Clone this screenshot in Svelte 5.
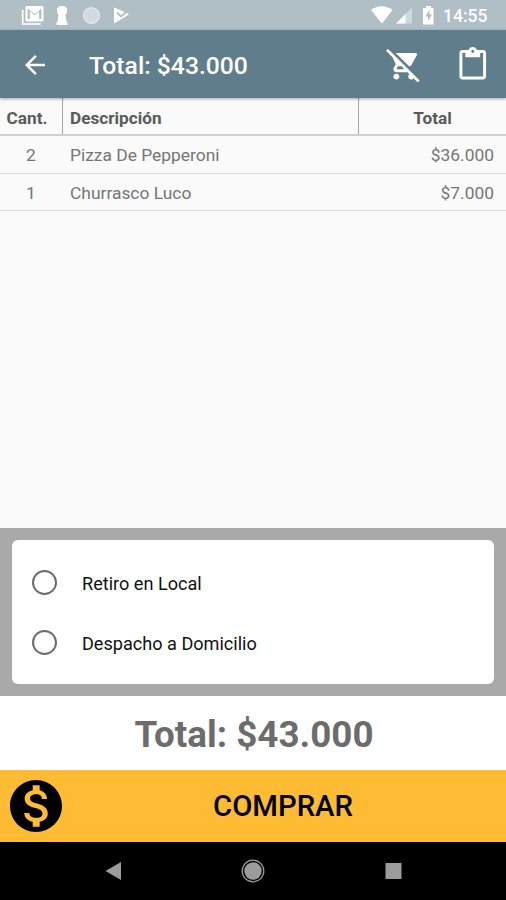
<script>
    const total = '$43.000'
    const items = [
        { qty: 2, name: 'Pizza De Pepperoni', price: '$36.000' },
        { qty: 1, name: 'Churrasco Luco', price: '$7.000' }
    ]
    const options = ['Retiro en Local', 'Despacho a Domicilio']
    let selected = ''
</script>

<div class="screen">
    <div class="status">
        <svg class="notifications" width="112" height="30" viewBox="0 0 112 30" fill="#fff">
            <path d="M1.700 10v14h18" fill="none" stroke="#fff" stroke-width="1.700" />
            <path fill-rule="evenodd" d="M6 6h15q1.500 0 1.500 1.500v12.500q0 1.500-1.500 1.500H6q-1.500 0-1.500-1.500V7.500Q4.500 6 6 6zM6.600 8.600V19h2.300V11.300l4.600 3.900 4.600-3.900V19h2.300V8.600L13.500 14z" />
            <path d="M38.500 6h5l2.500 2.500v4l-1.500 2.500 1 7h1v3h-11v-3h1l1-7-1.500-2.500v-4z" />
            <circle cx="70.500" cy="15.500" r="7.800" fill="#d1dade" stroke="#e1e7ea" stroke-width="1.500" />
            <path d="M93 7.500L106 13l2 1.500L93 23.500z" />
            <path d="M96 12.500l4 4 7.500-6.500" fill="none" stroke="#b0bec5" stroke-width="1.800" />
        </svg>
        <svg class="signals" width="66" height="30" viewBox="0 0 66 30" fill="#fff">
            <path d="M0 10Q10.500 2.500 21.500 10L11 23.500z" />
            <path d="M41 7.500v16H25z" fill="#d0d9dd" />
            <path d="M34.500 14v9.500h-9.500z" />
            <path fill-rule="evenodd" d="M55 6h5v2h2.500v16.500H52V8h3zM58.500 10l-4 6.500H57V21l4-6.500h-2.500z" />
        </svg>
        <span class="clock">14:55</span>
    </div>

    <header>
        <svg class="back" viewBox="0 0 24 24" fill="#fff">
            <path d="M20 11H7.830l5.590-5.590L12 4l-8 8 8 8 1.410-1.410L7.830 13H20v-2z" />
        </svg>
        <h1>Total: {total}</h1>
        <svg class="action" viewBox="0 0 24 24" fill="#fff">
            <path d="M22.730 22.730L2.770 2.770 2 2l-.730-.730L0 2.540l4.390 4.390 2.210 4.660-1.350 2.450c-.160.280-.250.610-.250.960 0 1.100.900 2 2 2h7.460l1.380 1.380c-.500.360-.830.950-.830 1.620 0 1.100.890 2 1.990 2 .670 0 1.260-.330 1.620-.840L21.460 24l1.270-1.270zM7.420 15c-.140 0-.250-.110-.250-.250l.030-.120.900-1.630h2.360l2 2H7.420zm8.130-2c.750 0 1.410-.410 1.750-1.030l3.580-6.490c.080-.140.120-.310.120-.480 0-.550-.450-1-1-1H6.540l9.010 9zM7 18c-1.100 0-1.990.900-1.990 2S5.900 22 7 22s2-.900 2-2-.900-2-2-2z" />
        </svg>
        <svg class="action" viewBox="0 0 24 24" fill="#fff">
            <path d="M19 2h-4.180C14.400.840 13.300 0 12 0c-1.300 0-2.400.840-2.820 2H5c-1.100 0-2 .900-2 2v16c0 1.100.900 2 2 2h14c1.100 0 2-.900 2-2V4c0-1.100-.900-2-2-2zm-7 0c.550 0 1 .450 1 1s-.450 1-1 1-1-.450-1-1 .450-1 1-1zm7 18H5V4h2v3h10V4h2v16z" />
        </svg>
    </header>

    <main>
        <div class="row head">
            <span class="qty">Cant.</span>
            <span class="name">Descripción</span>
            <span class="price">Total</span>
        </div>
        {#each items as item}
            <div class="row">
                <span class="qty">{item.qty}</span>
                <span class="name">{item.name}</span>
                <span class="price">{item.price}</span>
            </div>
        {/each}
    </main>

    <section class="delivery">
        <div class="card">
            {#each options as option}
                <label>
                    <input type="radio" name="delivery" value={option} bind:group={selected} />
                    <span>{option}</span>
                </label>
            {/each}
        </div>
    </section>

    <div class="total"><span>Total: {total}</span></div>

    <button class="buy">
        <svg viewBox="2 2 20 20">
            <path d="M12 2C6.480 2 2 6.480 2 12s4.480 10 10 10 10-4.480 10-10S17.520 2 12 2zm1.410 16.090V20h-2.670v-1.930c-1.710-.360-3.160-1.460-3.270-3.400h1.960c.100 1.050.820 1.870 2.650 1.870 1.960 0 2.400-.980 2.400-1.590 0-.830-.440-1.610-2.670-2.140-2.480-.600-4.180-1.620-4.180-3.670 0-1.720 1.390-2.840 3.110-3.210V4h2.670v1.950c1.860.450 2.790 1.860 2.850 3.390H14.300c-.050-1.110-.640-1.870-2.220-1.870-1.500 0-2.400.680-2.400 1.640 0 .840.650 1.390 2.670 1.910s4.180 1.390 4.180 3.910c-.010 1.830-1.380 2.830-3.120 3.160z" />
        </svg>
        <span>COMPRAR</span>
    </button>

    <nav>
        <svg width="506" height="58" viewBox="0 0 506 58" fill="#9c9c9c">
            <path d="M105.500 29L121 20v18z" />
            <circle cx="253" cy="29" r="10.800" fill="none" stroke="#9c9c9c" stroke-width="1.300" />
            <circle cx="253" cy="29" r="8.700" />
            <path d="M385.500 21h16v16h-16z" />
        </svg>
    </nav>
</div>

<style>
    :global(body) {
        margin: 0;
    }
    .screen {
        display: flex;
        flex-direction: column;
        width: 506px;
        height: 900px;
        overflow: hidden;
        background: #fafafa;
        font-family: Roboto, sans-serif;
    }
    .status {
        display: flex;
        align-items: center;
        height: 30px;
        padding-left: 21px;
        background: #b0bec5;
    }
    .signals {
        margin-left: 238px;
    }
    .clock {
        margin-left: 6px;
        padding-top: 2px;
        color: #fff;
        font-size: 17.5px;
        font-weight: 500;
        line-height: 30px;
    }
    header {
        display: flex;
        align-items: center;
        height: 68px;
        flex-shrink: 0;
        position: relative;
        box-sizing: border-box;
        padding: 1px 16px 0 20px;
        background: #607d8b;
        box-shadow: 0 1px 3px rgba(0, 0, 0, .35);
    }
    .back {
        width: 30px;
        height: 30px;
    }
    h1 {
        flex: 1;
        margin: 0 0 0 39px;
        padding-top: 2px;
        color: #fff;
        font-size: 24.7px;
        font-weight: 500;
    }
    .action {
        width: 35.5px;
        height: 35.5px;
        margin-left: 33.5px;
    }
    main {
        flex: 1;
    }
    .row {
        display: flex;
        height: 37px;
        box-sizing: border-box;
        border-bottom: 1px solid #d8d8d8;
        color: #757575;
        font-size: 17.4px;
        line-height: 38px;
    }
    .row span {
        box-sizing: border-box;
    }
    .qty {
        width: 62px;
        text-align: center;
    }
    .name {
        width: 297px;
        padding-left: 8px;
    }
    .price {
        flex: 1;
        padding-right: 12px;
        text-align: right;
    }
    .row:nth-child(2) {
        height: 38px;
    }
    .head {
        height: 38px;
        border-bottom: 2px solid #d0d0d0;
        color: #5a5a5a;
        font-size: 17.2px;
        font-weight: 700;
        line-height: 40px;
    }
    .head .qty {
        padding-right: 8px;
    }
    .head .name {
        padding-left: 7px;
        border: solid #a6a6a6;
        border-width: 0 1px;
    }
    .head .price {
        padding: 0;
        text-align: center;
    }
    .delivery {
        height: 168px;
        box-sizing: border-box;
        padding: 12px;
        background: #a9a9a9;
    }
    .card {
        height: 144px;
        box-sizing: border-box;
        padding: 12px 20px;
        border-radius: 6px;
        background: #fff;
    }
    label {
        display: flex;
        align-items: center;
        height: 60px;
        color: #111;
        font-size: 18.1px;
    }
    label span {
        padding-top: 2px;
    }
    input {
        appearance: none;
        width: 25px;
        height: 25px;
        margin: 0 25px 0 0;
        border: 2px solid #6c6c6c;
        border-radius: 50%;
    }
    input:checked {
        background: #6c6c6c;
        box-shadow: inset 0 0 0 4px #fff;
    }
    .total {
        height: 74px;
        padding-left: 2px;
        background: #fff;
        color: #6c6c6c;
        font-size: 36.8px;
        font-weight: 700;
        line-height: 78px;
        text-align: center;
    }
    .buy {
        display: flex;
        align-items: center;
        height: 72px;
        padding: 0 0 0 10px;
        border: 0;
        background: #ffbb33;
        color: #000;
        font-family: inherit;
        font-size: 29.3px;
        font-weight: 500;
    }
    .buy svg {
        width: 52px;
        height: 52px;
    }
    .buy span {
        flex: 1;
        padding-right: 2px;
        text-align: center;
    }
    nav {
        height: 58px;
        background: #000;
    }
</style>
